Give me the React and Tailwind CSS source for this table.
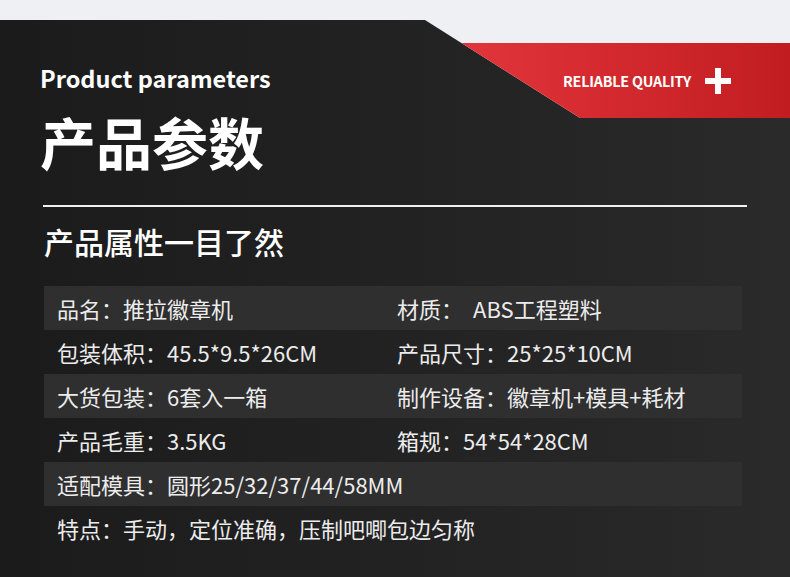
const rows = [
  { a: "品名：推拉徽章机", b: ["材质：", "ABS工程塑料"], shade: true },
  { a: "包装体积：45.5*9.5*26CM", b: ["产品尺寸：", "25*25*10CM"] },
  { a: "大货包装：6套入一箱", b: ["制作设备：", "徽章机+模具+耗材"], shade: true },
  { a: "产品毛重：3.5KG", b: ["箱规：", "54*54*28CM"] },
  { a: "适配模具：圆形25/32/37/44/58MM", shade: true },
  { a: "特点：手动，定位准确，压制吧唧包边匀称" },
];

const App = () => {
  return (
    <div className="w-[790px] h-[577px] overflow-hidden bg-gradient-to-r from-[#1b1b1b] via-[#222222] to-[#2a2a2a] text-white font-['Noto_Sans_CJK_SC','Noto_Sans',sans-serif]">
      <div className="h-[20px] bg-[#eff0f4]" />

      <div className="flex">
        <div className="flex-1 pl-[40px] pt-[42px]">
          <div className="text-[23.5px] leading-[32px] font-bold">Product parameters</div>
          <div className="mt-[17px] text-[56px] leading-[60px] font-bold">产品参数</div>
        </div>
        <div className="w-[365px] h-[98px] self-start bg-[#eff0f4] pt-[23px] [clip-path:polygon(0_0,100%_0,100%_100%,155px_100%)]">
          <div className="h-[75px] flex items-center pl-[138px] bg-gradient-to-r from-[#e4383d] via-[#d42a2f] to-[#c11d20]">
            <span className="text-[14.3px] font-bold tracking-[-0.2px]">RELIABLE QUALITY</span>
            <svg width="26" height="26" viewBox="0 0 26 26" className="ml-[14px]">
              <rect x="10" y="0" width="6" height="26" fill="#fff" />
              <rect x="0" y="10" width="26" height="6" fill="#fff" />
            </svg>
          </div>
        </div>
      </div>

      <div className="mx-[43px] mt-[34px] h-[2px] w-[704px] bg-[#f0f0f0]" />

      <div className="pl-[44px] mt-[14px] text-[30px] leading-[40px] font-medium">产品属性一目了然</div>

      <div className="ml-[44px] mt-[25px] w-[698px] text-[22px] text-[#ececec]">
        {rows.map((r, i) => (
          <div
            key={i}
            className={`grid grid-cols-[340px_1fr] items-center h-[44px] pl-[13px] ${r.shade ? "bg-[#2f2f2f]" : ""}`}
          >
            <div className="whitespace-nowrap">{r.a}</div>
            {r.b && (
              <div className="whitespace-nowrap">
                {r.b[0]}
                <span className={r.b[0] === "材质：" ? "ml-[10px]" : ""}>{r.b[1]}</span>
              </div>
            )}
          </div>
        ))}
      </div>
    </div>
  );
};

export default App;
